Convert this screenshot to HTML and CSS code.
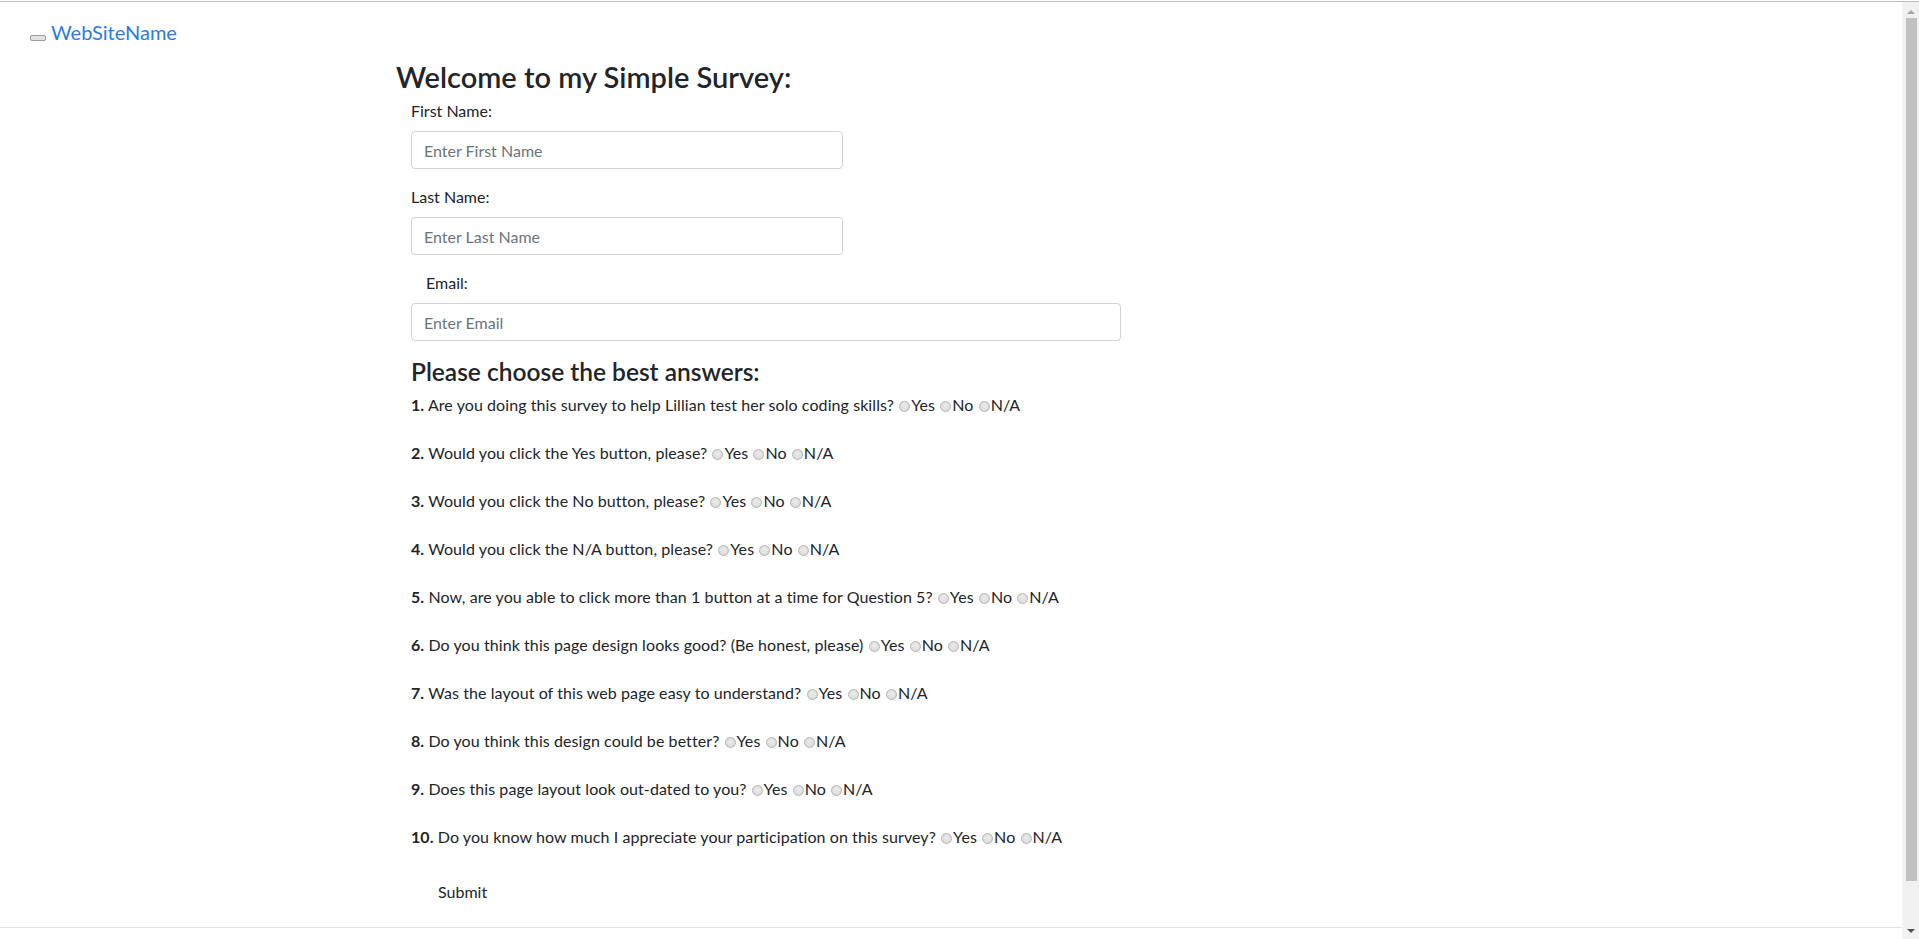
FILE: index.html
```html
<!DOCTYPE html>
<html lang="en">
<head>
<meta charset="utf-8">
<title>Simple Survey</title>
<link rel="stylesheet" href="styles.css">
</head>
<body>
<div class="topline"></div>
<div class="frame">
  <div class="page">
    <nav class="navbar">
      <button class="toggler" type="button"></button>
      <a class="brand" href="#">WebSiteName</a>
    </nav>
    <div class="container">
      <h3 class="title">Welcome to my Simple Survey:</h3>
      <form class="survey">
        <div class="form-group">
          <label class="label">First Name:</label>
          <input class="form-control name-input" type="text" placeholder="Enter First Name">
        </div>
        <div class="form-group">
          <label class="label">Last Name:</label>
          <input class="form-control name-input" type="text" placeholder="Enter Last Name">
        </div>
        <div class="form-group">
          <label class="label email-label">Email:</label>
          <input class="form-control email-input" type="email" placeholder="Enter Email">
        </div>
        <h4 class="subtitle">Please choose the best answers:</h4>
        <div class="questions">
          <p class="q"><b>1.</b> Are you doing this survey to help Lillian test her solo coding skills? <input class="radio" type="radio" name="q1">Yes <input class="radio" type="radio" name="q1">No <input class="radio" type="radio" name="q1">N/A</p>
          <p class="q"><b>2.</b> Would you click the Yes button, please? <input class="radio" type="radio" name="q2">Yes <input class="radio" type="radio" name="q2">No <input class="radio" type="radio" name="q2">N/A</p>
          <p class="q"><b>3.</b> Would you click the No button, please? <input class="radio" type="radio" name="q3">Yes <input class="radio" type="radio" name="q3">No <input class="radio" type="radio" name="q3">N/A</p>
          <p class="q"><b>4.</b> Would you click the N/A button, please? <input class="radio" type="radio" name="q4">Yes <input class="radio" type="radio" name="q4">No <input class="radio" type="radio" name="q4">N/A</p>
          <p class="q"><b>5.</b> Now, are you able to click more than 1 button at a time for Question 5? <input class="radio" type="radio" name="q5a">Yes <input class="radio" type="radio" name="q5b">No <input class="radio" type="radio" name="q5c">N/A</p>
          <p class="q"><b>6.</b> Do you think this page design looks good? (Be honest, please) <input class="radio" type="radio" name="q6">Yes <input class="radio" type="radio" name="q6">No <input class="radio" type="radio" name="q6">N/A</p>
          <p class="q"><b>7.</b> Was the layout of this web page easy to understand? <input class="radio" type="radio" name="q7">Yes <input class="radio" type="radio" name="q7">No <input class="radio" type="radio" name="q7">N/A</p>
          <p class="q"><b>8.</b> Do you think this design could be better? <input class="radio" type="radio" name="q8">Yes <input class="radio" type="radio" name="q8">No <input class="radio" type="radio" name="q8">N/A</p>
          <p class="q"><b>9.</b> Does this page layout look out-dated to you? <input class="radio" type="radio" name="q9">Yes <input class="radio" type="radio" name="q9">No <input class="radio" type="radio" name="q9">N/A</p>
          <p class="q"><b>10.</b> Do you know how much I appreciate your participation on this survey? <input class="radio" type="radio" name="q10">Yes <input class="radio" type="radio" name="q10">No <input class="radio" type="radio" name="q10">N/A</p>
        </div>
        <button class="submit" type="submit">Submit</button>
      </form>
    </div>
    <div class="footer-line"></div>
  </div>
  <div class="scrollbar">
    <span class="arrow arrow-up"></span>
    <div class="thumb"></div>
    <span class="arrow arrow-down"></span>
  </div>
</div>
</body>
</html>
```

FILE: styles.css
```css
html, body {
  margin: 0;
  padding: 0;
  height: 100%;
  overflow: hidden;
  background: #ffffff;
}

body {
  font-family: "Lato", "Open Sans", sans-serif;
  font-size: 16px;
  line-height: 24px;
  color: #212529;
  display: flex;
  flex-direction: column;
}

.topline {
  margin-top: 1px;
  height: 1px;
  background: #bdbdbd;
  flex: none;
}

.frame {
  flex: 1;
  display: flex;
  min-height: 0;
}

.page {
  flex: 1;
  min-width: 0;
  display: flex;
  flex-direction: column;
}

/* navbar */
.navbar {
  display: flex;
  align-items: flex-start;
  padding: 15px 0 13px 30px;
}

.toggler {
  width: 16px;
  height: 6px;
  margin: 18px 5px 0 0;
  padding: 0;
  box-sizing: border-box;
  border: 1px solid #9c9c9c;
  border-radius: 2px;
  background: #e3e3e3;
}

.brand {
  font-size: 20px;
  line-height: 30px;
  color: #2a7be4;
  text-decoration: none;
}

/* container */
.container {
  width: 1110px;
  margin: 0 auto;
}

.title {
  margin: 0 0 5px;
  font-size: 29px;
  line-height: 34px;
  font-weight: 600;
}

.survey {
  padding-left: 15px;
}

.form-group {
  margin-bottom: 16px;
}

.label {
  display: block;
  margin-bottom: 8px;
}

.email-label {
  padding-left: 15px;
}

.form-control {
  display: block;
  box-sizing: border-box;
  height: 38px;
  padding: 6px 12px;
  font-family: inherit;
  font-size: 16px;
  line-height: 24px;
  color: #495057;
  background: #fff;
  border: 1px solid #ced4da;
  border-radius: 4px;
  margin: 0;
}

.form-control::placeholder {
  color: #6c757d;
  opacity: 1;
}

.name-input {
  width: 432px;
}

.email-input {
  width: 710px;
}

.subtitle {
  margin: 0 0 7px;
  font-size: 24.5px;
  line-height: 29px;
  font-weight: 600;
}

.q {
  margin: 0 0 24px;
  white-space: nowrap;
  letter-spacing: 0.08px;
}

.q b {
  font-weight: 700;
}

.radio {
  appearance: none;
  -webkit-appearance: none;
  width: 11px;
  height: 11px;
  margin: 0 1px 0 1px;
  box-sizing: border-box;
  border: 1px solid #b4b4b4;
  border-radius: 50%;
  background: radial-gradient(circle at 50% 40%, #ececec 0%, #d6d6d6 100%);
  vertical-align: -1px;
}

.submit {
  margin: 0 0 0 14px;
  padding: 6px 12px;
  font-family: inherit;
  font-size: 16px;
  line-height: 24px;
  color: #212529;
  background: transparent;
  border: 1px solid transparent;
  border-radius: 4px;
}

.footer-line {
  margin-top: 16px;
  height: 1px;
  background: #e2e2e2;
}

/* fake window scrollbar */
.scrollbar {
  width: 17px;
  flex: none;
  background: #f1f1f1;
  border-left: 1px solid #f7f7f7;
  box-sizing: border-box;
  display: flex;
  flex-direction: column;
  align-items: center;
}

.arrow {
  width: 0;
  height: 0;
  border-left: 4px solid transparent;
  border-right: 4px solid transparent;
}

.arrow-up {
  margin-top: 8px;
  border-bottom: 4px solid #a3a3a3;
}

.arrow-down {
  margin-top: auto;
  margin-bottom: 6px;
  border-top: 4px solid #505050;
}

.thumb {
  margin-top: 4px;
  width: 11px;
  height: 863px;
  background: #c1c1c1;
}
```
